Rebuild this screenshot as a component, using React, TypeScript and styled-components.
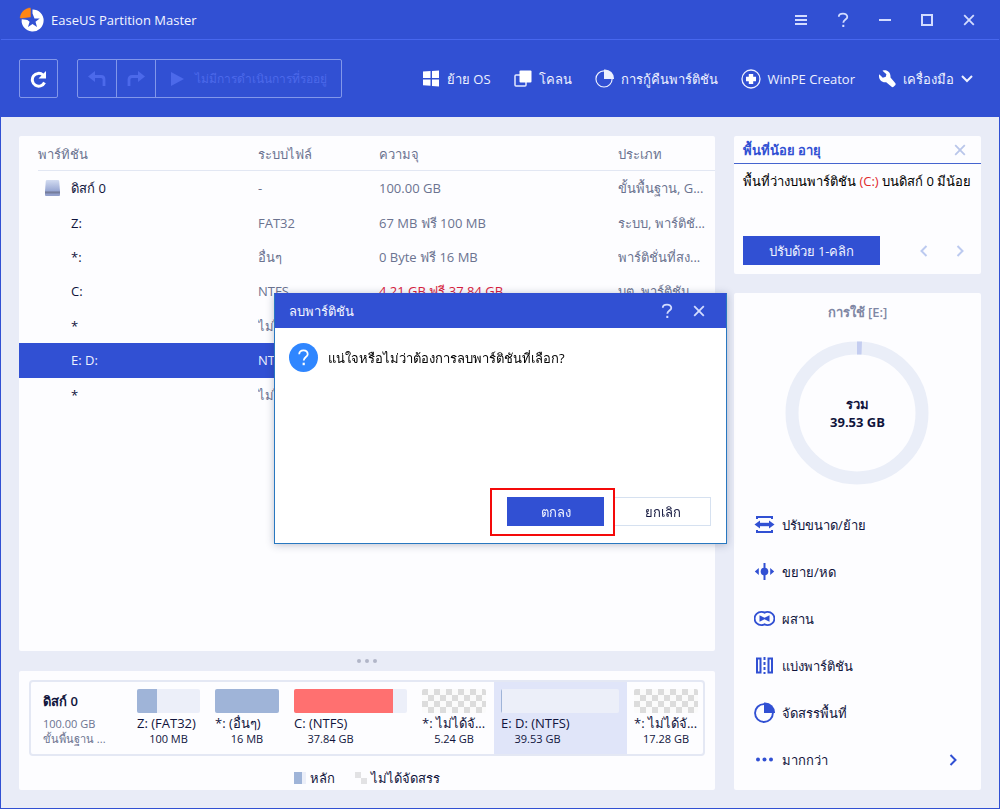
import React from "react";
import styled, { createGlobalStyle, css } from "styled-components";

const blue = "#3150d3";
const ink = "#10143c";
const grey = "#6b7390";
const paper = "#fdfdff";
const canvas = "#e9ecf7";
const pale = "#eceff9";
const primary = "#9fb4d8";

const Global = createGlobalStyle`
  *, *::before, *::after { box-sizing: border-box; }
  body { margin: 0; background: ${canvas}; }
  body, button { font-family: "Open Sans", "Noto Sans", "Liberation Sans", sans-serif; font-size: 13px; line-height: 18px; color: ${ink}; }
  button { margin: 0; padding: 0; border: 0; background: none; cursor: pointer; white-space: nowrap; }
  svg { display: block; flex: none; }
`;

const Window = styled.div`
  min-height: 100vh;
  display: flex;
  flex-direction: column;
  border: 1px solid ${blue};
  border-top: 0;
  background: ${canvas};
`;

const TitleBar = styled.header`
  height: 40px;
  display: flex;
  align-items: center;
  justify-content: space-between;
  padding: 0 21px 0 18px;
  background: ${blue};
  border-bottom: 1px solid #4767ee;
`;

const Brand = styled.h1`
  margin: 0;
  display: flex;
  align-items: center;
  gap: 6px;
  font-size: 13px;
  line-height: 18px;
  font-weight: 400;
  color: #f3f5ff;
`;

const WindowControls = styled.div`
  display: flex;
  gap: 24px;
`;

const IconButton = styled.button`
  display: grid;
  place-items: center;
  min-width: 18px;
  height: 18px;
  color: inherit;
`;

const ChromeButton = styled(IconButton)`
  color: #d3dcff;
`;

const ToolBar = styled.nav`
  height: 77px;
  display: flex;
  align-items: center;
  justify-content: space-between;
  padding: 0 26px 0 18px;
  background: ${blue};
`;

const ToolGroup = styled.div`
  display: flex;
  gap: 19px;
`;

const OutlinedGroup = styled.div`
  display: flex;
  height: 39px;
  border: 1px solid #8297ea;
  border-radius: 2px;
`;

const OutlinedButton = styled.button<{ $width: number }>`
  display: flex;
  align-items: center;
  justify-content: center;
  width: ${(p) => p.$width}px;
  color: #fff;
  &:disabled { color: #4c69ea; }
  & + & { border-left: 1px solid #8297ea; }
`;

const PendingButton = styled(OutlinedButton)`
  justify-content: flex-start;
  gap: 11px;
  padding-left: 15px;
  font-size: 12px;
  border-left: 1px solid #8297ea;
`;

const ToolLinks = styled.div`
  display: flex;
  gap: 23px;
`;

const ToolLink = styled.button`
  display: flex;
  align-items: center;
  gap: 7px;
  color: #eef1ff;
`;

const Main = styled.main`
  flex: 1;
  display: grid;
  grid-template-columns: minmax(0, 1fr) 247px;
  gap: 19px;
  padding: 19px 18px 18px;
`;

const Column = styled.div`
  display: flex;
  flex-direction: column;
  min-width: 0;
`;

const Side = styled.aside`
  display: flex;
  flex-direction: column;
  gap: 19px;
`;

const Card = styled.section`
  background: ${paper};
  border-radius: 2px;
`;

const TableCard = styled(Card)`
  flex: 1;
  overflow: hidden;
`;

const Table = styled.table`
  width: 100%;
  height: 276px;
  border-collapse: collapse;
  table-layout: fixed;
`;

const Col = styled.col<{ $w?: number }>`
  width: ${(p) => (p.$w ? p.$w + "px" : "auto")};
`;

const Th = styled.th`
  padding: 0;
  text-align: left;
  font-weight: 400;
  color: ${grey};
`;

const HeadLabel = styled.div<{ $inset?: boolean }>`
  height: 35px;
  padding-top: 9px;
  margin-left: ${(p) => (p.$inset ? "19px" : "0")};
  border-bottom: 1px solid #e2e7f3;
`;

const Row = styled.tr<{ $selected?: boolean }>`
  height: 34px;
  color: ${grey};
  ${(p) => p.$selected && css`background: ${blue};`}
  td { color: ${(p) => (p.$selected ? "#eef1ff" : "inherit")}; }
  th { color: ${(p) => (p.$selected ? "#eef1ff" : ink)}; }
`;

const Td = styled.td<{ $alert?: boolean }>`
  padding: 0;
  white-space: nowrap;
  overflow: hidden;
  && { ${(p) => p.$alert && css`color: #d9203c;`} }
`;

const Name = styled.div<{ $disk?: boolean }>`
  display: flex;
  align-items: center;
  gap: 11px;
  padding-left: ${(p) => (p.$disk ? "26px" : "52px")};
`;

const Grip = styled.div`
  height: 20px;
  display: flex;
  align-items: center;
  justify-content: center;
  gap: 4px;
`;

const Dot = styled.span`
  width: 4px;
  height: 4px;
  border-radius: 50%;
  background: #b1b6c8;
`;

const MapCard = styled(Card)`
  height: 119px;
  padding: 9px 10px 0;
`;

const DiskStrip = styled.div`
  height: 76px;
  display: grid;
  grid-template-columns: 99px 78fr 79fr 128fr 79fr 133fr 76fr;
  border: 2px solid #e4e8f4;
  border-radius: 4px;
`;

const DiskInfo = styled.div`
  padding: 9px 0 0 12px;
  font-size: 11px;
  line-height: 15px;
  color: ${grey};
  white-space: nowrap;
`;

const DiskName = styled.strong`
  display: block;
  margin-bottom: 5px;
  font-size: 13px;
  line-height: 20px;
  font-weight: 600;
  color: ${ink};
`;

const Block = styled.div<{ $selected?: boolean }>`
  min-width: 0;
  padding: 7px 8px 0 7px;
  background: ${(p) => (p.$selected ? "#e0e5f9" : "transparent")};
  &:last-child { padding-right: 5px; }
`;

const Bar = styled.div<{ $free?: boolean }>`
  height: 24px;
  overflow: hidden;
  border-radius: 2px;
  background: ${(p) =>
    p.$free
      ? "repeating-conic-gradient(#fbfbfb 0 25%, #dcdcdc 0 50%) 0 0 / 12px 12px"
      : pale};
`;

const Fill = styled.div<{ $color: string }>`
  height: 100%;
  background: ${(p) => p.$color};
`;

const BlockText = styled.div`
  max-width: 73px;
  line-height: 16px;
  padding-top: 2px;
  white-space: nowrap;
`;

const BlockSize = styled.div`
  font-size: 11px;
  text-align: center;
`;

const Legend = styled.div`
  display: flex;
  justify-content: center;
  gap: 20px;
  padding-top: 13px;
`;

const LegendItem = styled.span`
  display: flex;
  align-items: center;
  gap: 4px;
`;

const Swatch = styled.span<{ $free?: boolean }>`
  width: 12px;
  height: 12px;
  background: ${(p) =>
    p.$free
      ? "repeating-conic-gradient(#fdfdff 0 25%, #e2e2e4 0 50%)"
      : `linear-gradient(90deg, ${primary} 8px, ${pale} 8px)`};
`;

const TipCard = styled(Card)`
  height: 138px;
  display: flex;
  flex-direction: column;
`;

const TipHead = styled.div`
  height: 28px;
  display: flex;
  align-items: center;
  justify-content: space-between;
  padding: 0 12px 0 9px;
  border-bottom: 1px solid #4564cf;
  color: #b9c6ea;
`;

const TipTitle = styled.h2`
  margin: 0;
  font-size: 13px;
  line-height: 18px;
  font-weight: 600;
  color: ${blue};
`;

const TipText = styled.p`
  flex: 1;
  margin: 0;
  padding: 8px 0 0 9px;
  color: #000;
  white-space: nowrap;
`;

const Warn = styled.span`
  color: #e02a2a;
`;

const TipFoot = styled.div`
  display: flex;
  align-items: center;
  padding: 0 12px 9px 9px;
  color: #bccaf0;
`;

const PrimaryButton = styled.button`
  height: 29px;
  background: ${blue};
  color: #f0f3ff;
`;

const TipButton = styled(PrimaryButton)`
  width: 137px;
`;

const Pager = styled.div`
  flex: 1;
  display: flex;
  justify-content: flex-end;
  gap: 18px;
`;

const UsageCard = styled(Card)`
  flex: 1;
  display: flex;
  flex-direction: column;
  align-items: center;
`;

const UsageTitle = styled.h2`
  margin: 0;
  padding: 10px 0 19px;
  font-size: 13px;
  line-height: 18px;
  font-weight: 600;
  color: #7f87a4;
`;

const Donut = styled.div`
  display: grid;
  place-items: center;
  & > * { grid-area: 1 / 1; }
`;

const DonutLabel = styled.div`
  text-align: center;
  font-weight: 700;
`;

const Actions = styled.ul`
  align-self: stretch;
  margin: 0;
  padding: 15px 24px 0 20px;
  list-style: none;
`;

const Action = styled.button`
  width: 100%;
  height: 47px;
  display: flex;
  align-items: center;
  gap: 7px;
  color: ${ink};
  svg { color: ${blue}; }
  svg + span { flex: 1; text-align: left; }
`;

const Overlay = styled.div`
  position: fixed;
  inset: 0;
  display: flex;
  align-items: center;
  justify-content: center;
  padding: 28px 0 0 1px;
`;

const Dialog = styled.div`
  width: 453px;
  min-height: 251px;
  display: flex;
  flex-direction: column;
  background: #fff;
  border: 1px solid #2878c0;
  border-top-color: ${blue};
  box-shadow: 0 1px 8px rgba(40, 50, 90, 0.3);
`;

const DialogHead = styled.div`
  height: 34px;
  display: flex;
  align-items: center;
  justify-content: space-between;
  padding: 0 18px 0 14px;
  background: ${blue};
  color: #d3dcff;
`;

const DialogTitle = styled.h2`
  margin: 0;
  font-size: 13px;
  line-height: 18px;
  font-weight: 400;
  color: #f3f5ff;
`;

const HeadButtons = styled.div`
  display: flex;
  gap: 14px;
`;

const DialogBody = styled.div`
  flex: 1;
  display: flex;
  align-items: flex-start;
  gap: 10px;
  padding: 15px 14px;
`;

const Question = styled.p`
  margin: 0;
  padding: 6px 0;
  color: #000;
`;

const DialogFoot = styled.div`
  display: flex;
  justify-content: flex-end;
  padding: 0 15px 7px;
`;

const Highlight = styled.div`
  padding: 7px 9px 8px 15px;
  border: 2px solid #f40a0a;
`;

const OkButton = styled(PrimaryButton)`
  width: 97px;
`;

const CancelButton = styled.button`
  width: 96px;
  height: 29px;
  margin-top: 9px;
  border: 1px solid #d6e1f0;
  border-left: 0;
  background: #fff;
  color: ${ink};
`;

const stroke = { fill: "none", stroke: "currentColor" };

const Logo = () => (
  <svg width="26" height="26" viewBox="0 0 26 26" aria-hidden="true">
    <path d="M13.500 13.500V2.500A11 11 0 1 1 2.700 12.200z" fill="#fff" />
    <path d="M12 1v9.500L3 11.600C1.500 11.700.7 11.500.7 10.500 1.200 5 6 .9 11 .5z" fill="#ff8614" stroke={blue} strokeWidth=".6" />
    <path d="M13.500 6.500l2 5h5.200l-4.200 3.300 1.500 5.200-4.500-3.100L9 20l1.600-5.200-4.100-3.300h5z" fill={blue} />
  </svg>
);
const Close = ({ w = 2 }: { w?: number }) => (
  <svg width="12" height="12" viewBox="0 0 12 12" {...stroke} strokeWidth={w} aria-hidden="true"><path d="M1.200 1.200l9.600 9.600M10.800 1.200l-9.600 9.600" /></svg>
);
const Help = () => (
  <svg width="16" height="16" viewBox="0 0 16 16" {...stroke} strokeWidth="1.800" aria-hidden="true">
    <path d="M3.800 4.800C3.800 2.600 5.500 1.600 8 1.600s4.300 1.200 4.300 3.400C12.300 7.500 8.300 7.700 8.300 10.800" /><path d="M8.300 12.800v2.200" strokeWidth="2" />
  </svg>
);
const Chevron = ({ right, w = 2 }: { right?: boolean; w?: number }) => (
  <svg width="8" height="12" viewBox="0 0 8 12" {...stroke} strokeWidth={w} aria-hidden="true"><path d={right ? "M1.500 1l5 5-5 5" : "M6.500 1l-5 5 5 5"} /></svg>
);
const Pie = ({ size, w }: { size: number; w: number }) => (
  <svg width={size} height={size} viewBox="0 0 20 20" {...stroke} strokeWidth={w} aria-hidden="true">
    <circle cx="9.500" cy="10.500" r="8.500" /><path d="M9.500.5h1A9.500 9.500 0 0 1 20 10v.5H9.500z" fill="currentColor" stroke="none" />
  </svg>
);

const rows = [
  { name: "Z:", fs: "FAT32", cap: "67 MB ฟรี 100 MB", type: "ระบบ, พาร์ติชั..." },
  { name: "*:", fs: "อื่นๆ", cap: "0 Byte ฟรี 16 MB", type: "พาร์ติชั่นที่สง..." },
  { name: "C:", fs: "NTFS", cap: "4.21 GB ฟรี 37.84 GB", type: "บูต, พาร์ติชัน", alert: true },
  { name: "*", fs: "ไม่ได้จัดสรร", cap: "", type: "" },
  { name: "E: D:", fs: "NTFS", cap: "", type: "", selected: true },
  { name: "*", fs: "ไม่ได้จัดสรร", cap: "", type: "" },
];

const blocks = [
  { label: "Z: (FAT32)", size: "100 MB", used: "20px", color: primary },
  { label: "*: (อื่นๆ)", size: "16 MB", used: "100%", color: primary },
  { label: "C: (NTFS)", size: "37.84 GB", used: "88%", color: "#ff7070" },
  { label: "*: ไม่ได้จั...", size: "5.24 GB", free: true },
  { label: "E: D: (NTFS)", size: "39.53 GB", used: "1px", color: primary, selected: true },
  { label: "*: ไม่ได้จั...", size: "17.28 GB", free: true },
];

const actions = [
  { label: "ปรับขนาด/ย้าย", icon: <><path d="M3 5V3h15v2M3 16v2h15v-2" strokeWidth="2" /><path d="M4 10.500h13" strokeWidth="3.400" /><path d="M6 6.500v8L.5 10.500zM15 6.500v8l5.500-4z" fill="currentColor" stroke="none" /></> },
  { label: "ขยาย/หด", icon: <><path d="M10.500 2v17" strokeWidth="2" /><circle cx="10.500" cy="10.500" r="3.800" fill="currentColor" stroke="none" /><path d="M4.800 7v7L.8 10.500zM16.200 7v7l4-3.500z" fill="currentColor" stroke="none" /></> },
  { label: "ผสาน", icon: <><path d="M10.500 4.700C9.500 3.900 8.500 3.800 7.300 3.800a6.700 6.700 0 0 0 0 13.400c1.200 0 2.200-.2 3.200-.9 1 .7 2 .9 3.200.9a6.700 6.700 0 0 0 0-13.400c-1.200 0-2.200.1-3.200.9z" strokeWidth="1.800" /><path d="M5.500 7.300l5 2.400 5-2.400v6.400l-5-2.400-5 2.400z" fill="currentColor" stroke="none" /></> },
  { label: "แบ่งพาร์ติชัน", icon: <><path d="M3 3.500h3.500v14H3zM14.500 3.500H18v14h-3.500z" strokeWidth="2" /><path d="M10.500 2v17" strokeWidth="2" strokeDasharray="3 2" /></> },
];

export default function App() {
  return (
    <>
      <Global />
      <Window>
        <TitleBar>
          <Brand><Logo />EaseUS Partition Master</Brand>
          <WindowControls>
            <ChromeButton aria-label="Menu"><svg width="12" height="12" {...stroke} strokeWidth="2"><path d="M0 2h12M0 6h12M0 10h12" /></svg></ChromeButton>
            <ChromeButton aria-label="Help"><Help /></ChromeButton>
            <ChromeButton aria-label="Minimize"><svg width="12" height="12" {...stroke} strokeWidth="2"><path d="M0 6h12" /></svg></ChromeButton>
            <ChromeButton aria-label="Maximize"><svg width="12" height="12" {...stroke} strokeWidth="2"><path d="M1 1h10v10H1z" /></svg></ChromeButton>
            <ChromeButton aria-label="Close"><Close w={1.8} /></ChromeButton>
          </WindowControls>
        </TitleBar>
        <ToolBar>
          <ToolGroup>
            <OutlinedGroup>
              <OutlinedButton $width={37} aria-label="Refresh">
                <svg width="18" height="18" viewBox="0 0 18 18" {...stroke} strokeWidth="3"><path d="M13 5A6.400 6.400 0 1 0 14.500 12.500" /><path d="M16 1v7.500H8.500z" fill="currentColor" stroke="none" /></svg>
              </OutlinedButton>
            </OutlinedGroup>
            <OutlinedGroup>
              <OutlinedButton $width={38} disabled aria-label="Undo">
                <svg width="18" height="16" viewBox="0 0 18 16" {...stroke} strokeWidth="2.800"><path d="M5 5.500h8q3 0 3 3V15" /><path d="M7 0v11L0 5.500z" fill="currentColor" stroke="none" /></svg>
              </OutlinedButton>
              <OutlinedButton $width={39} disabled aria-label="Redo">
                <svg width="18" height="16" viewBox="0 0 18 16" {...stroke} strokeWidth="2.800"><path d="M13 5.500H5q-3 0-3 3V15" /><path d="M11 0v11l7-5.500z" fill="currentColor" stroke="none" /></svg>
              </OutlinedButton>
              <PendingButton $width={186} disabled>
                <svg width="13" height="14" fill="currentColor"><path d="M0 0l13 7-13 7z" /></svg>ไม่มีการดำเนินการที่รออยู่
              </PendingButton>
            </OutlinedGroup>
          </ToolGroup>
          <ToolLinks>
            <ToolLink><svg width="17" height="17" fill="#fff"><path d="M0 1.500L7.500 1v7H0zM9 1l7-.5V8H9zM0 9.500h7.500v6.300L0 15.200zM9 9.500h7v7l-7-.6z" /></svg>ย้าย OS</ToolLink>
            <ToolLink><svg width="18" height="18"><rect x="1" y="5" width="11" height="11" rx="1" fill="none" stroke="#e4e9ff" strokeWidth="1.500" /><rect x="5.500" y=".5" width="12" height="12" rx="1" fill="#fff" /></svg>โคลน</ToolLink>
            <ToolLink><Pie size={19} w={1.2} />การกู้คืนพาร์ติชัน</ToolLink>
            <ToolLink><svg width="20" height="20"><circle cx="10" cy="10" r="9" {...stroke} strokeWidth="1.300" /><path d="M10 5v10M5 10h10" stroke="#fff" strokeWidth="4.400" /></svg>WinPE Creator</ToolLink>
            <ToolLink>
              <svg width="18" height="18" viewBox="0 0 18 18"><path d="M4.500.8C8.500-.8 13 2 12.500 7.500l4.700 5.500q1 1.300-.3 2.600l-1.300 1.200q-1.200.9-2.300-.3L8.200 12.200C3.500 13 0 8.800 1.200 4.200l3.600 3.600 3-1 .6-2.600z" fill="#fff" /></svg>
              เครื่องมือ
              <svg width="12" height="8" {...stroke} strokeWidth="2"><path d="M1 1l5 5 5-5" /></svg>
            </ToolLink>
          </ToolLinks>
        </ToolBar>
        <Main>
          <Column>
            <TableCard>
              <Table>
                <colgroup><Col $w={239} /><Col $w={121} /><Col $w={239} /><Col /></colgroup>
                <thead>
                  <tr>
                    <Th><HeadLabel $inset>พาร์ทิชัน</HeadLabel></Th>
                    <Th><HeadLabel>ระบบไฟล์</HeadLabel></Th>
                    <Th><HeadLabel>ความจุ</HeadLabel></Th>
                    <Th><HeadLabel>ประเภท</HeadLabel></Th>
                  </tr>
                </thead>
                <tbody>
                  <Row>
                    <Th scope="row">
                      <Name $disk>
                        <svg width="15" height="16"><defs><linearGradient id="disk" x2="0" y2="1"><stop offset="0" stopColor="#d3dcf1" /><stop offset="1" stopColor="#98a7d3" /></linearGradient></defs><path d="M2 0h11q1 0 1.200 1L15 11H0L.8 1Q1 0 2 0z" fill="url(#disk)" /><path d="M0 11h15v4q0 1-1 1H1q-1 0-1-1z" fill="#929fcb" /><path d="M0 12.500h15" stroke="#757d9c" strokeWidth="2" /></svg>
                        ดิสก์ 0
                      </Name>
                    </Th>
                    <Td>-</Td><Td>100.00 GB</Td><Td>ขั้นพื้นฐาน, G...</Td>
                  </Row>
                  {rows.map((r, i) => (
                    <Row key={i} $selected={r.selected}>
                      <Th scope="row"><Name>{r.name}</Name></Th>
                      <Td>{r.fs}</Td>
                      <Td $alert={r.alert}>{r.cap}</Td>
                      <Td>{r.type}</Td>
                    </Row>
                  ))}
                </tbody>
              </Table>
            </TableCard>
            <Grip><Dot /><Dot /><Dot /></Grip>
            <MapCard>
              <DiskStrip>
                <DiskInfo><DiskName>ดิสก์ 0</DiskName>100.00 GB<br />ขั้นพื้นฐาน ...</DiskInfo>
                {blocks.map((b, i) => (
                  <Block key={i} $selected={b.selected}>
                    <Bar $free={b.free}>{b.used && <Fill $color={b.color!} style={{ width: b.used }} />}</Bar>
                    <BlockText>{b.label}<BlockSize>{b.size}</BlockSize></BlockText>
                  </Block>
                ))}
              </DiskStrip>
              <Legend>
                <LegendItem><Swatch />หลัก</LegendItem>
                <LegendItem><Swatch $free />ไม่ได้จัดสรร</LegendItem>
              </Legend>
            </MapCard>
          </Column>
          <Side>
            <TipCard>
              <TipHead>
                <TipTitle>พื้นที่น้อย อายุ</TipTitle>
                <IconButton aria-label="Dismiss"><Close w={1.8} /></IconButton>
              </TipHead>
              <TipText>พื้นที่ว่างบนพาร์ติชัน <Warn>(C:)</Warn> บนดิสก์ 0 มีน้อย</TipText>
              <TipFoot>
                <TipButton>ปรับด้วย 1-คลิก</TipButton>
                <Pager>
                  <IconButton aria-label="Previous"><Chevron /></IconButton>
                  <IconButton aria-label="Next"><Chevron right /></IconButton>
                </Pager>
              </TipFoot>
            </TipCard>
            <UsageCard>
              <UsageTitle>การใช้ [E:]</UsageTitle>
              <Donut>
                <svg width="145" height="146" viewBox="0 0 145 146" fill="none" aria-hidden="true">
                  <circle cx="72" cy="73" r="65" stroke="#eaeef8" strokeWidth="13" />
                  <path d="M72 1.500h5l-.5 13H72z" fill="#c4cdf0" />
                </svg>
                <DonutLabel>รวม<br />39.53 GB</DonutLabel>
              </Donut>
              <Actions>
                {actions.map((a) => (
                  <li key={a.label}>
                    <Action><svg width="21" height="21" {...stroke}>{a.icon}</svg><span>{a.label}</span></Action>
                  </li>
                ))}
                <li><Action><Pie size={21} w={1.8} /><span>จัดสรรพื้นที่</span></Action></li>
                <li>
                  <Action>
                    <svg width="21" height="21" fill="currentColor"><circle cx="4" cy="10.500" r="2" /><circle cx="10.500" cy="10.500" r="2" /><circle cx="17" cy="10.500" r="2" /></svg>
                    <span>มากกว่า</span><Chevron right />
                  </Action>
                </li>
              </Actions>
            </UsageCard>
          </Side>
        </Main>
      </Window>
      <Overlay>
        <Dialog role="dialog" aria-labelledby="dialog-title">
          <DialogHead>
            <DialogTitle id="dialog-title">ลบพาร์ติชัน</DialogTitle>
            <HeadButtons>
              <IconButton aria-label="Help"><Help /></IconButton>
              <IconButton aria-label="Close"><Close w={1.8} /></IconButton>
            </HeadButtons>
          </DialogHead>
          <DialogBody>
            <svg width="29" height="29"><circle cx="14.500" cy="14.500" r="14.500" fill="#2f86ff" /><g transform="translate(6.200 6.200)" fill="none" stroke="#fff" strokeWidth="1.800"><path d="M4 5C4 2.700 5.700 1.200 8.200 1.200s4.300 1.500 4.300 3.800c0 2.800-4 3-4 6.300" /><path d="M8.500 13.500V16" strokeWidth="2.200" /></g></svg>
            <Question>แน่ใจหรือไม่ว่าต้องการลบพาร์ติชันที่เลือก?</Question>
          </DialogBody>
          <DialogFoot>
            <Highlight><OkButton>ตกลง</OkButton></Highlight>
            <CancelButton>ยกเลิก</CancelButton>
          </DialogFoot>
        </Dialog>
      </Overlay>
    </>
  );
}
